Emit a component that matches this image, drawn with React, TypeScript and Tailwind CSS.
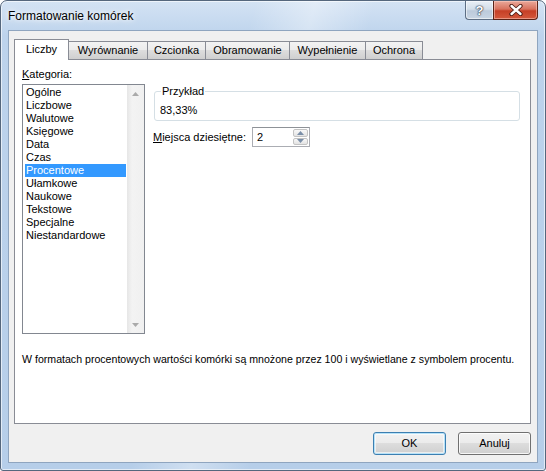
import React from "react";

const tabs = [
  { label: "Liczby", w: "w-[55px]", active: true },
  { label: "Wyrównanie", w: "w-[80px]" },
  { label: "Czcionka", w: "w-[59px]" },
  { label: "Obramowanie", w: "w-[85px]" },
  { label: "Wypełnienie", w: "w-[77px]" },
  { label: "Ochrona", w: "w-[58px]" },
];

const categories = [
  "Ogólne",
  "Liczbowe",
  "Walutowe",
  "Księgowe",
  "Data",
  "Czas",
  "Procentowe",
  "Ułamkowe",
  "Naukowe",
  "Tekstowe",
  "Specjalne",
  "Niestandardowe",
];

function Triangle({ up, color = "#a3a3a3" }: { up?: boolean; color?: string }) {
  return (
    <svg width="7" height="4" viewBox="0 0 7 4">
      {up ? <path d="M0 4 L3.5 0 L7 4 Z" fill={color} /> : <path d="M0 0 L3.5 4 L7 0 Z" fill={color} />}
    </svg>
  );
}

function TitleButtons() {
  return (
    <div className="ml-auto mr-[7px] flex">
      <div className="flex h-[19px] w-[28px] items-center justify-center rounded-bl-[4px] border border-t-0 border-r-0 border-[#5d6e84] bg-[linear-gradient(to_bottom,#e9eff6,#d3dee9_45%,#bccadb_55%,#c8d5e3)] shadow-[inset_0_0_0_1px_rgba(255,255,255,0.55)]">
        <span className="text-[13px] font-bold leading-none text-white [text-shadow:0_0_1px_#2e3b4c,0_0_1px_#2e3b4c,0_0_2px_#2e3b4c]">
          ?
        </span>
      </div>
      <div className="flex h-[19px] w-[45px] items-center justify-center rounded-br-[4px] border border-t-0 border-[#5a2318] bg-[linear-gradient(to_bottom,#eaa99b,#d8725e_45%,#c63f26_55%,#d4593d)] shadow-[inset_0_0_0_1px_rgba(255,210,200,0.5)]">
        <svg width="14" height="12" viewBox="0 0 14 12">
          <path d="M2.5 2 L11.5 10 M11.5 2 L2.5 10" stroke="#4a1a12" strokeWidth="4.2" strokeLinecap="round" />
          <path d="M2.5 2 L11.5 10 M11.5 2 L2.5 10" stroke="#ffffff" strokeWidth="2.4" strokeLinecap="round" />
        </svg>
      </div>
    </div>
  );
}

function Tabs() {
  return (
    <div className="flex h-[20px] items-end">
      {tabs.map((t, i) =>
        t.active ? (
          <div
            key={t.label}
            className={`${t.w} relative z-10 -mb-px flex h-[21px] items-center justify-center border border-b-0 border-[#898c95] bg-white pb-[1px]`}
          >
            {t.label}
          </div>
        ) : (
          <div
            key={t.label}
            className={`${t.w} ${i > 0 ? "-ml-px" : ""} flex h-[18px] items-center justify-center border border-b-0 border-[#898c95] bg-[linear-gradient(to_bottom,#f3f3f3,#ebebeb_50%,#dddddd_50%,#cfcfcf)]`}
          >
            {t.label}
          </div>
        )
      )}
    </div>
  );
}

function CategoryList() {
  return (
    <div className="flex h-[250px] w-[123px] border border-[#828790] bg-white">
      <div className="flex-1 pl-[2px] pr-[1px] pt-[1px]">
        {categories.map((c) => (
          <div
            key={c}
            className={`h-[13px] pl-[1px] leading-[13px] ${c === "Procentowe" ? "bg-[#3399ff] text-white" : ""}`}
          >
            {c}
          </div>
        ))}
      </div>
      <div className="flex w-[17px] flex-col bg-[linear-gradient(to_right,#e6e6e6,#f3f3f3_30%,#f0f0f0)]">
        <div className="flex h-[17px] items-center justify-center">
          <Triangle up color="#aaaaaa" />
        </div>
        <div className="flex-1" />
        <div className="flex h-[17px] items-center justify-center">
          <Triangle color="#aaaaaa" />
        </div>
      </div>
    </div>
  );
}

function Spinner() {
  return (
    <div className="flex h-[20px] w-[58px] border border-[#abadb3] border-t-[#8e9297] bg-white">
      <div className="flex-1 pl-[4px] leading-[18px]">2</div>
      <div className="flex w-[16px] flex-col gap-[1px] py-[1px] pr-[1px]">
        <div className="flex flex-1 items-center justify-center rounded-[2px] border border-[#c3c3c3] bg-[linear-gradient(to_bottom,#f8f8f8,#e3e3e3)]">
          <Triangle up color="#7a8fa8" />
        </div>
        <div className="flex flex-1 items-center justify-center rounded-[2px] border border-[#c3c3c3] bg-[linear-gradient(to_bottom,#f8f8f8,#e3e3e3)]">
          <Triangle color="#7a8fa8" />
        </div>
      </div>
    </div>
  );
}

function DialogButton({ label, primary }: { label: string; primary?: boolean }) {
  return (
    <div
      className={`flex h-[23px] w-[73px] items-center justify-center rounded-[3px] border bg-[linear-gradient(to_bottom,#f2f2f2,#ebebeb_50%,#dddddd_50%,#cfcfcf)] ${
        primary
          ? "border-[#3c7fb1] shadow-[inset_0_0_0_1px_#b7e2f8,inset_0_0_0_2px_rgba(255,255,255,0.6)]"
          : "border-[#707070] shadow-[inset_0_0_0_1px_rgba(255,255,255,0.8)]"
      }`}
    >
      {label}
    </div>
  );
}

export default function App() {
  return (
    <div className="h-[471px] w-[546px] bg-white font-['Liberation_Sans',Arial,sans-serif] text-[11px] text-black">
      <div className="flex h-full flex-col rounded-t-[7px] rounded-b-[3px] border border-[#55677d] bg-[linear-gradient(105deg,rgba(255,255,255,0)_38%,rgba(255,255,255,0.35)_47%,rgba(255,255,255,0)_56%),linear-gradient(to_bottom,#d4e3f4,#bdd3ec_35px,#b6cee9)] shadow-[inset_0_0_0_1px_rgba(255,255,255,0.6)]">
        {/* title bar */}
        <div className="flex h-[29px] shrink-0 items-start">
          <div className="pl-[7px] pt-[7px] text-[12px] leading-[16px] [text-shadow:0_0_8px_#ffffff,0_0_4px_#ffffff]">
            Formatowanie komórek
          </div>
          <TitleButtons />
        </div>

        {/* client area */}
        <div className="mx-[7px] mb-[7px] flex flex-1 flex-col border border-[#8fa5bf] bg-[#f0f0f0] pb-[7px] pl-[5px] pr-[6px] pt-[8px]">
          <Tabs />
          <div className="flex flex-1 flex-col border border-[#898c95] bg-white pl-[7px] pt-[8px]">
            <div className="flex gap-[8px]">
              <div className="flex flex-col">
                <div className="h-[13px] leading-[13px]">
                  <span className="underline underline-offset-[1px]">K</span>ategoria:
                </div>
                <div className="mt-[3px]">
                  <CategoryList />
                </div>
              </div>
              <div className="flex flex-col pt-[17px]">
                <fieldset className="ml-[1px] w-[366px] rounded-[3px] border border-[#d5dfe5] px-[5px] pb-[3px]">
                  <legend className="ml-[1px] px-[1px] leading-[13px]">Przykład</legend>
                  <div className="pt-[6px] leading-[13px]">83,33%</div>
                </fieldset>
                <div className="mt-[6px] flex items-center">
                  <div className="w-[99px]">
                    <span className="underline underline-offset-[1px]">M</span>iejsca dziesiętne:
                  </div>
                  <Spinner />
                </div>
              </div>
            </div>
            <div className="mt-[19px] whitespace-nowrap text-[10.6px] leading-[13px]">
              W formatach procentowych wartości komórki są mnożone przez 100 i wyświetlane z symbolem procentu.
            </div>
          </div>
          <div className="mt-[8px] flex justify-end gap-[12px]">
            <DialogButton label="OK" primary />
            <DialogButton label="Anuluj" />
          </div>
        </div>
      </div>
    </div>
  );
}
